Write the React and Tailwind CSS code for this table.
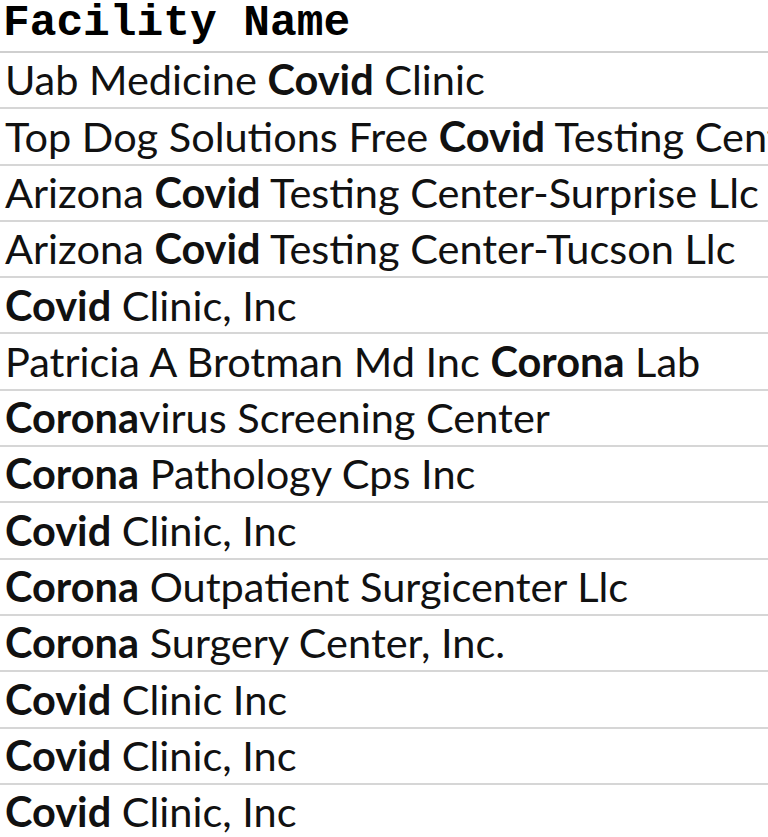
import React from "react";

const rows = [
  [["", "Uab Medicine "], ["b", "Covid"], ["", " Clinic"]],
  [["", "Top Dog Solutions Free "], ["b", "Covid"], ["", " Testing Center"]],
  [["", "Arizona "], ["b", "Covid"], ["", " Testing Center-Surprise Llc"]],
  [["", "Arizona "], ["b", "Covid"], ["", " Testing Center-Tucson Llc"]],
  [["b", "Covid"], ["", " Clinic, Inc"]],
  [["", "Patricia A Brotman Md Inc "], ["b", "Corona"], ["", " Lab"]],
  [["b", "Corona"], ["", "virus Screening Center"]],
  [["b", "Corona"], ["", " Pathology Cps Inc"]],
  [["b", "Covid"], ["", " Clinic, Inc"]],
  [["b", "Corona"], ["", " Outpatient Surgicenter Llc"]],
  [["b", "Corona"], ["", " Surgery Center, Inc."]],
  [["b", "Covid"], ["", " Clinic Inc"]],
  [["b", "Covid"], ["", " Clinic, Inc"]],
  [["b", "Covid"], ["", " Clinic, Inc"]],
];

export default function App() {
  return (
    <div className="w-[768px] h-[837px] overflow-hidden bg-white text-black">
      <div className="h-[53px] border-b-2 border-[#cfcfcf] pl-[3px] flex items-start">
        <span className="font-['Liberation_Mono',monospace] font-bold text-[44.5px] leading-[44px] mt-[1px] whitespace-nowrap">
          Facility Name
        </span>
      </div>
      {rows.map((r, i) => (
        <div
          key={i}
          className="h-[56.3px] border-b-2 border-[#d6d6d6] pl-[5px] flex items-center whitespace-nowrap overflow-hidden font-['Lato',sans-serif] text-[41.5px] leading-none text-[#111]"
        >
          <span className="whitespace-pre">
            {r.map(([t, s], j) =>
              t === "b" ? (
                <b key={j} className="font-bold">{s}</b>
              ) : (
                <React.Fragment key={j}>{s}</React.Fragment>
              )
            )}
          </span>
        </div>
      ))}
    </div>
  );
}
